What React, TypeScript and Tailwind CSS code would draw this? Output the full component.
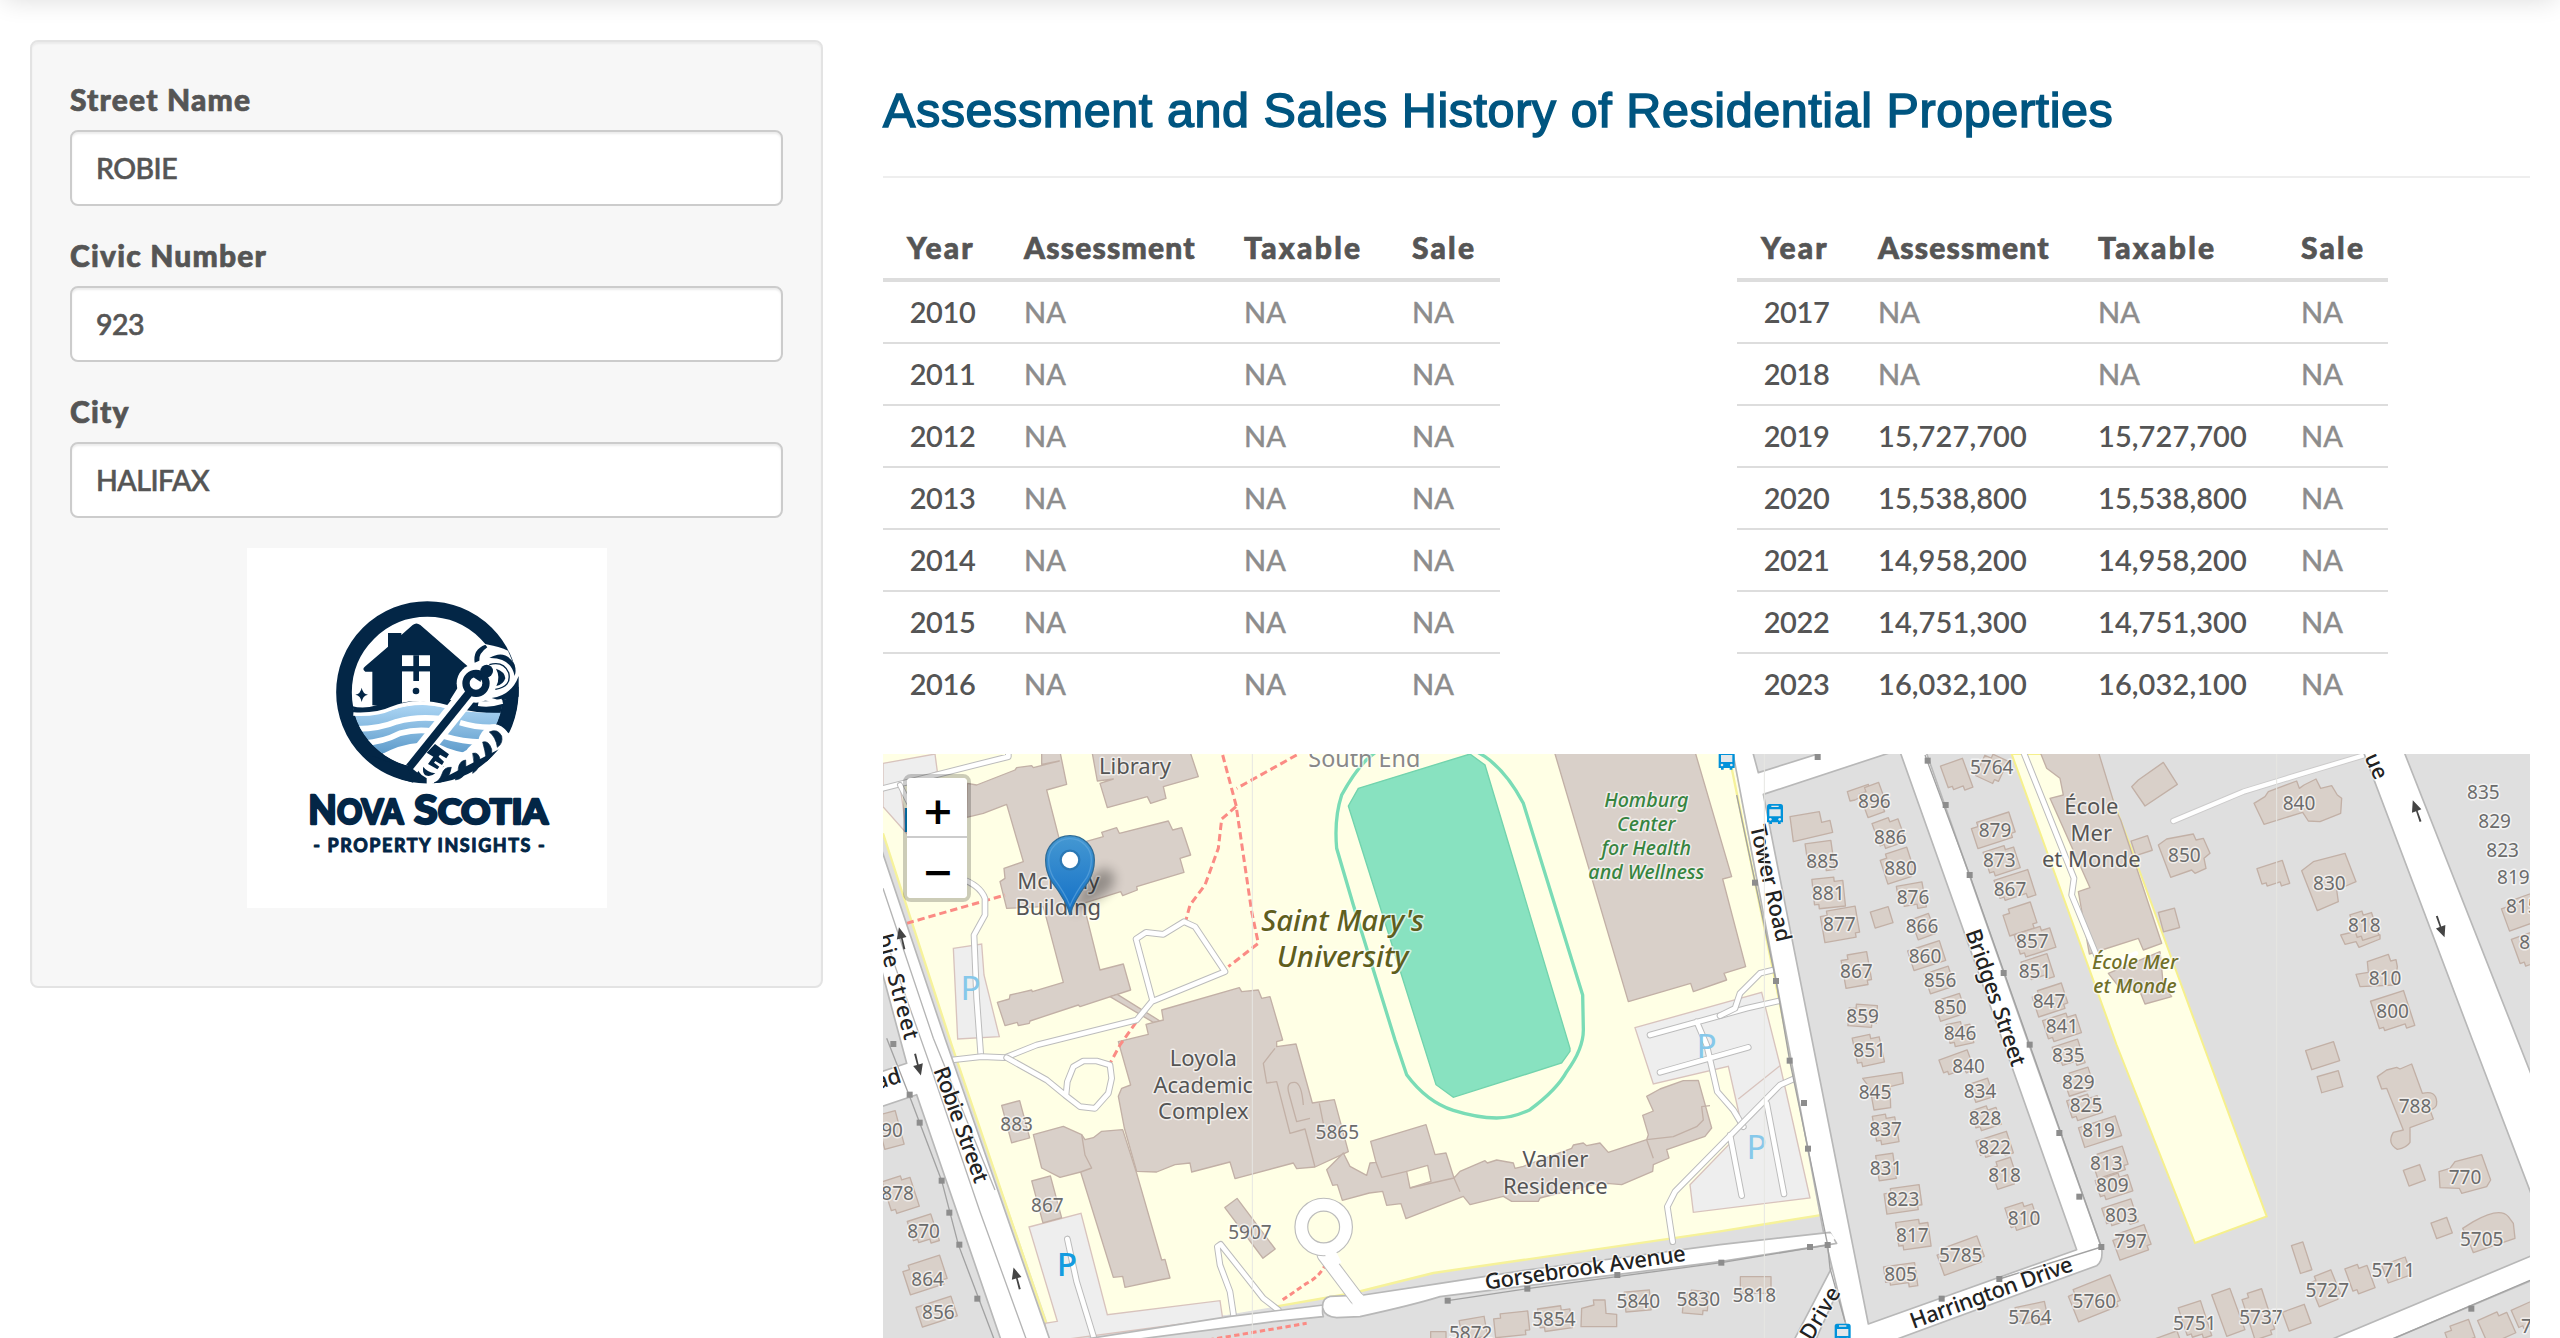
import React from "react";

type Row = [string, string, string, string];
type Label = [string, number, number];
type House = [number, number, number, number, number];

const EARLY: Row[] = ["2010", "2011", "2012", "2013", "2014", "2015", "2016"].map(
  (y) => [y, "NA", "NA", "NA"] as Row
);
const LATE: Row[] = [
  ["2017", "NA", "NA", "NA"],
  ["2018", "NA", "NA", "NA"],
  ["2019", "15,727,700", "15,727,700", "NA"],
  ["2020", "15,538,800", "15,538,800", "NA"],
  ["2021", "14,958,200", "14,958,200", "NA"],
  ["2022", "14,751,300", "14,751,300", "NA"],
  ["2023", "16,032,100", "16,032,100", "NA"],
];

function Field({ label, value }: { label: string; value: string }) {
  return (
    <label className="mb-5 block">
      <span className="block h-[60px] pt-[9px] text-[30px] leading-[40px] font-black tracking-[1.2px] text-[#555] [-webkit-text-stroke:0.7px_#555]">
        {label}
      </span>
      <span className="flex h-[76px] items-center rounded-lg border-2 border-[#ccc] bg-white pl-[24px] text-[28.5px] font-medium tracking-[-0.5px] text-[#555] shadow-[inset_0_2px_2px_rgba(0,0,0,0.075)] [-webkit-text-stroke:0.6px_#555]">
        {value}
      </span>
    </label>
  );
}

function HistoryTable({ rows, cols }: { rows: Row[]; cols: string }) {
  return (
    <div className="text-[29px] leading-[40px] text-[#555]">
      <div
        className={`grid h-[66px] border-b-4 border-[#ddd] pt-[11px] text-[30px] font-black [-webkit-text-stroke:0.7px_#555] ${cols}`}
      >
        <span className="pl-6 tracking-[2.2px]">Year</span>
        <span className="pl-6 tracking-[1.2px]">Assessment</span>
        <span className="pl-6 tracking-[2.3px]">Taxable</span>
        <span className="pl-6 tracking-[2.2px]">Sale</span>
      </div>
      {rows.map((r, i) => (
        <div
          key={r[0]}
          className={`grid items-center ${cols} ${i === 0 ? "h-[60px]" : "h-[62px] border-t-2 border-[#ddd]"}`}
        >
          {r.map((v, j) => (
            <span
              key={j}
              className={
                j === 0
                  ? "pl-[2px] text-center font-semibold tracking-[-0.4px]"
                  : v === "NA"
                    ? "pl-6 text-[#8c8c8c] [-webkit-text-stroke:0.5px_#8c8c8c]"
                    : "pl-[24px] font-semibold tracking-[0.1px]"
              }
            >
              {v}
            </span>
          ))}
        </div>
      ))}
    </div>
  );
}

function Logo() {
  const navy = "#032646";
  return (
    <svg className="mx-auto block h-[360px] w-[360px] bg-white" viewBox="21 24 1080 1080">
      <defs>
        <linearGradient id="sea" x1="0" y1="500" x2="0" y2="640" gradientUnits="userSpaceOnUse">
          <stop offset="0" stopColor="#a9d3f2" />
          <stop offset="1" stopColor="#5f9ccb" />
        </linearGradient>
        <clipPath id="disc">
          <circle cx="562" cy="457" r="228" />
        </clipPath>
      </defs>
      <circle cx="562" cy="457" r="250" fill="#fff" stroke={navy} strokeWidth="47" />
      <g clipPath="url(#disc)">
        <path d="M335 498Q370 508 410 496L470 480H720L800 490V522Q700 520 640 500Q560 480 480 500Q400 530 335 518Z" fill={navy} />
        <path d="M335 522Q400 528 455 510Q530 486 600 500Q690 522 790 518V640H335Z" fill="url(#sea)" />
        <path d="M335 510Q400 518 455 497Q520 478 600 490" fill="none" stroke="#fff" strokeWidth="0" />
        <path d="M330 566Q410 570 470 545Q530 528 600 536M660 548Q730 570 800 558M370 610Q430 606 480 580Q530 566 580 574M610 588Q690 612 760 604" fill="none" stroke="#fff" strokeWidth="17" />
        <path d="M420 645Q480 612 540 608L500 700H400ZM590 610Q650 640 700 640V720H560Z" fill="#fff" />
      </g>
      <path d="M397 496V395H376Q364 388 376 379L444 320V279H484V285L518 255Q529 246 541 255L690 385L620 496Q560 470 486 488Q440 500 397 496Z" fill={navy} />
      <path d="M340 522Q410 526 455 505Q530 475 620 500" fill="none" stroke="#fff" strokeWidth="11" />
      <path d="M486 346H570V379H486ZM486 394H570V488Q528 480 486 488Z" fill="#fff" />
      <path d="M520 346H537V423H520ZM486 379H570V394H486Z" fill={navy} />
      <circle cx="528" cy="453" r="10" fill={navy} />
      <path d="M365 443Q368 461 384 464Q368 467 365 486Q362 467 346 464Q362 461 365 443Z" fill={navy} />
      <path d="M400 648Q450 672 500 676L520 728Q440 710 390 660Z" fill={navy} />
      {/* rope */}
      <path d="M560 740L850 590L806 580Q780 545 748 555Q720 575 715 600Q690 615 680 630Q640 650 610 680L560 700Z" fill="#fff" />
      <g fill={navy} stroke={navy} strokeWidth="2" strokeLinejoin="round">
        <path d="M748 576Q772 564 785 588Q790 610 772 622Q768 592 748 576Z" />
        <path d="M728 606Q746 600 755 628Q758 650 740 664Q735 630 728 606Z" />
        <path d="M698 640Q717 635 721 662Q718 688 698 700Q706 668 698 640Z" />
        <path d="M677 660Q658 663 655 685Q656 705 646 720Q672 716 678 692Z" />
        <path d="M634 682Q612 680 606 702Q598 724 583 728Q626 732 634 682Z" />
      </g>
      <path d="M779 545Q790 500 790 460L836 440Q836 520 804 578Q795 556 779 545Z" fill={navy} />
      {/* key ring */}
      <path d="M735 312Q780 320 804 332L836 408Q830 470 790 480L745 478L700 400Z" fill="#fff" />
      <path d="M704 368Q698 328 736 314L742 322Q716 340 718 362Z" fill={navy} />
      <path d="M748 354Q795 326 823 372Q830 392 824 408Q812 352 748 354Z" fill={navy} />
      <path d="M748 374Q790 362 806 398Q816 440 766 448" fill="none" stroke={navy} strokeWidth="4" />
      <path d="M768 386Q795 395 796 415Q790 434 769 438Q782 412 768 386Z" fill={navy} />
      <path d="M755 474Q815 466 836 408V470L792 480Q775 482 755 474Z" fill={navy} />
      <path d="M690 502Q740 480 785 490L779 517Q730 518 690 508Z" fill={navy} />
      <path d="M715 490Q750 496 787 484" fill="none" stroke="#fff" strokeWidth="16" />
      {/* key */}
      <path d="M690 455L510 680" stroke="#fff" strokeWidth="56" />
      <circle cx="708" cy="430" r="58" fill="#fff" />
      <path d="M585 605L630 645L590 712Q545 725 530 680Z" fill="#fff" />
      <path d="M740 393Q756 430 740 452" fill="none" stroke="#fff" strokeWidth="14" />
      <path d="M690 455L508 682" stroke={navy} strokeWidth="24" />
      <circle cx="708" cy="430" r="30" fill="none" stroke={navy} strokeWidth="22" />
      <circle cx="740" cy="393" r="19" fill={navy} />
      <path d="M700 412L724 408L722 426Z" fill={navy} />
      <path d="M585 612L627 643L619 655L600 644L596 650L612 665L606 675L586 663L582 668L598 680L592 688L564 672L580 650L560 638Z" fill={navy} />
      <path d="M550 680Q560 696 586 700Q572 712 556 706Q546 696 550 680Z" fill={navy} />
      <g fill={navy} stroke={navy} strokeLinejoin="round" fontFamily="Lato, sans-serif" fontWeight="900">
        <text x="205" y="851" fontSize="122" strokeWidth="7" textLength="285" lengthAdjust="spacingAndGlyphs">
          N<tspan fontSize="103">OVA</tspan>
        </text>
        <text x="522" y="851" fontSize="122" strokeWidth="7" textLength="402" lengthAdjust="spacingAndGlyphs">
          S<tspan fontSize="103">COTIA</tspan>
        </text>
        <text x="220" y="935" fontSize="54" strokeWidth="3" fontWeight="700" textLength="694">
          - PROPERTY INSIGHTS -
        </text>
      </g>
    </svg>
  );
}

/* Map drawing units are thirds of a pixel. */
const ADDRESSES: Label[] = [
  ["896", 2983, 168], ["886", 3031, 278], ["885", 2828, 348], ["880", 3062, 370], ["881", 2845, 445],
  ["876", 3099, 458], ["877", 2878, 537], ["866", 3126, 545], ["867", 2929, 680], ["860", 3135, 635],
  ["856", 3180, 707], ["850", 3211, 787], ["859", 2948, 815], ["846", 3240, 866], ["5764", 3335, 66],
  ["879", 3345, 256], ["873", 3358, 346], ["867", 3390, 433], ["857", 3457, 588], ["851", 3465, 678],
  ["847", 3507, 768], ["841", 3546, 845], ["851", 2969, 917], ["845", 2985, 1041], ["837", 3017, 1154],
  ["831", 3018, 1271], ["823", 3069, 1364], ["817", 3097, 1471], ["805", 3062, 1589], ["5785", 3242, 1531],
  ["840", 3266, 963], ["834", 3300, 1039], ["828", 3315, 1120], ["822", 3344, 1208], ["818", 3374, 1290],
  ["810", 3432, 1421], ["835", 3565, 930], ["829", 3595, 1012], ["825", 3618, 1082], ["819", 3656, 1156],
  ["813", 3679, 1255], ["809", 3697, 1321], ["803", 3724, 1411], ["797", 3752, 1489], ["5818", 2623, 1652],
  ["5764", 3450, 1717], ["5760", 3643, 1668], ["840", 4257, 175], ["850", 3913, 332], ["830", 4348, 415],
  ["818", 4453, 541], ["810", 4515, 701], ["800", 4538, 800], ["835", 4810, 142], ["829", 4844, 230],
  ["823", 4868, 315], ["819", 4900, 398], ["815", 4927, 485], ["811", 4967, 593], ["788", 4605, 1084],
  ["770", 4755, 1296], ["5705", 4805, 1483], ["5711", 4540, 1576], ["5727", 4342, 1636], ["5737", 4143, 1717],
  ["5751", 3944, 1735], ["761", 4972, 1744], ["883", 410, 1137], ["867", 502, 1382], ["5907", 1110, 1461],
  ["890", 20, 1157], ["878", 53, 1346], ["870", 131, 1459], ["864", 143, 1603], ["856", 175, 1702],
  ["5865", 1372, 1162], ["5872", 1772, 1764], ["5854", 2022, 1722], ["5840", 2275, 1668], ["5830", 2455, 1663],
];

/* centre x, centre y, width, height, rotation */
const HOUSES: House[] = [
  [2980, 165, 66, 88, -20], [3027, 262, 78, 84, -20], [2820, 335, 78, 88, -8], [3052, 362, 88, 88, -18],
  [2846, 443, 92, 90, -6], [3094, 455, 78, 76, -10], [2880, 538, 108, 92, -10], [3130, 545, 56, 64, -20],
  [3140, 632, 100, 62, -18], [2929, 675, 80, 98, -10], [3178, 705, 76, 62, -18], [3210, 787, 80, 62, -18],
  [2948, 812, 84, 66, 4], [3240, 866, 70, 70, -12], [3005, 517, 56, 50, -17],
  [3340, 256, 122, 76, -18], [3365, 345, 92, 78, -18], [3405, 428, 106, 80, -18], [3420, 522, 90, 78, -18],
  [3465, 588, 108, 74, -18], [3473, 673, 82, 72, -18], [3510, 765, 96, 76, -18], [3546, 845, 100, 70, -18],
  [3230, 95, 70, 92, -20], [3335, 70, 70, 80, 25],
  [2965, 915, 80, 90, -12], [3230, 960, 90, 64, -20], [3305, 1036, 56, 58, -18], [3318, 1118, 76, 66, -18],
  [3344, 1206, 96, 68, -18], [3372, 1285, 66, 80, -18], [3425, 1412, 82, 74, -18], [3566, 930, 80, 74, -18],
  [3596, 1010, 80, 66, -18], [3614, 1085, 92, 66, -18], [3660, 1160, 116, 62, -18], [3690, 1252, 100, 70, -18],
  [3702, 1322, 98, 64, -18], [3720, 1410, 92, 72, -18], [3756, 1492, 104, 76, -20],
  [3017, 1152, 66, 88, -10], [3018, 1266, 52, 76, -8], [3069, 1363, 108, 74, -8], [3100, 1468, 96, 84, -8],
  [3062, 1594, 94, 70, -8], [3242, 1532, 132, 78, -20], [2627, 1620, 92, 50, 0],
  [3456, 1711, 90, 66, -12], [3643, 1660, 140, 96, -22],
  [4453, 540, 64, 84, -18], [4538, 805, 104, 110, -18], [4940, 495, 140, 84, -20], [4980, 600, 150, 90, -20],
  [4180, 393, 80, 72, -18], [4328, 932, 88, 60, -18], [4350, 1010, 66, 50, -16],
  [4603, 1291, 52, 50, -20], [4685, 1449, 50, 50, -20], [4550, 1575, 74, 56, -20],
  [4265, 1538, 36, 88, -18], [4335, 1630, 74, 90, -22], [4440, 1600, 66, 84, -20],
  [4045, 1702, 58, 132, -20], [4135, 1708, 66, 140, -18], [4250, 1718, 70, 60, -20], [3945, 1730, 70, 110, -18],
  [4740, 1770, 80, 70, -20], [4850, 1745, 90, 80, -24], [4960, 1710, 110, 80, -24], [3860, 1790, 80, 40, -20],
  [3785, 302, 52, 46, -18], [3867, 525, 50, 60, -15],
  [30, 1155, 60, 104, -15], [62, 1347, 84, 104, -18], [130, 1458, 74, 84, -18], [135, 1590, 120, 86, -18],
  [170, 1700, 110, 62, -18], [407, 1130, 56, 116, -15], [500, 1363, 58, 130, -15],
  [1110, 1450, 46, 190, -37], [1780, 1750, 76, 60, -10], [1895, 1738, 104, 70, -6], [2025, 1720, 96, 70, -8],
  [2273, 1668, 76, 60, -5], [2447, 1672, 74, 70, 5], [1675, 1775, 46, 30, 0],
];

function House({ h, i }: { h: House; i: number }) {
  const [cx, cy, w, ht, r] = h;
  const a = w / 2;
  const b = ht / 2;
  const n = Math.min(w, ht) > 62 ? 13 : 0;
  const shapes = [
    `M${-a} ${-b + n}H${-a + n * 1.6}V${-b}H${a}V${b - n}H${a - n}V${b}H${-a}Z`,
    `M${-a} ${-b}H${a - n * 2}V${-b + n}H${a}V${b}H${-a + n}V${b - n}H${-a}Z`,
    `M${-a} ${-b}H${a}V${b}H${a - n * 2}V${b - n}H${-a + n}V${b - n * 1.8}H${-a}Z`,
  ];
  return <path d={shapes[i % 3]} transform={`translate(${cx} ${cy}) rotate(${r})`} />;
}

const NODES: [number, number][] = [
  [40, 897], [89, 1049], [119, 1133], [185, 1307], [208, 1403], [238, 1499], [292, 1661],
  [1703, 1667], [1942, 1631], [2212, 1590], [2524, 1553], [2790, 1506], [2843, 1500],
  [2625, 413], [2688, 708], [2729, 947], [2772, 1074], [2784, 1211], [2813, 36],
  [3143, 47], [3197, 180], [3269, 390], [3371, 684], [3449, 899], [3538, 1164], [3598, 1355], [3664, 1506],
  [3358, 1602], [3185, 1661], [4774, 1691],
];

function Cased({ d, w, edge = 6, color = "#bcbcbc" }: { d: string; w: number; edge?: number; color?: string }) {
  return (
    <g fill="none" strokeLinecap="round" strokeLinejoin="round">
      <path d={d} stroke={color} strokeWidth={w + edge} />
      <path d={d} stroke="#fff" strokeWidth={w} />
    </g>
  );
}

function Bus({ x, y }: { x: number; y: number }) {
  return (
    <g transform={`translate(${x} ${y})`}>
      <path d="M-17 -30H17Q24 -30 24 -22V25H17V30H9V25H-9V30H-17V25H-24V-22Q-24 -30 -17 -30Z" fill="#0092da" />
      <path d="M-11 -25H11V-21H-11ZM-17 -14H17V7H-17Z" fill="#e3e7ea" />
      <circle cx="-14" cy="16" r="4" fill="#e3e7ea" />
      <circle cx="14" cy="16" r="4" fill="#e3e7ea" />
    </g>
  );
}

function Arrow({ x, y, r }: { x: number; y: number; r: number }) {
  return (
    <path
      d="M-3 34L-2 0H-15L0 -34L15 0H3L3 34Z"
      fill="#444"
      transform={`translate(${x} ${y}) rotate(${r})`}
    />
  );
}

function Lines({
  lines, x, y, step, size, fill, italic,
}: { lines: string[]; x: number; y: number; step: number; size: number; fill: string; italic?: boolean }) {
  return (
    <g
      fontSize={size}
      fill={fill}
      fontStyle={italic ? "italic" : "normal"}
      fontWeight={italic ? 500 : 400}
      textAnchor="middle"
    >
      {lines.map((t, i) => (
        <text key={t} x={x} y={y + i * step}>
          {t}
        </text>
      ))}
    </g>
  );
}

function CampusMap() {
  return (
    <svg className="block h-[584px] w-[1647px]" viewBox="9 27 4941 1752">
      <defs>
        <linearGradient id="pin" x1="0" y1="270" x2="0" y2="510" gradientUnits="userSpaceOnUse">
          <stop offset="0" stopColor="#4598d2" />
          <stop offset="1" stopColor="#126fc6" />
        </linearGradient>
        <filter id="soft" x="-50%" y="-50%" width="200%" height="200%">
          <feGaussianBlur stdDeviation="17" />
        </filter>
      </defs>
      <rect x="0" y="0" width="4960" height="1800" fill="#dfdfdf" />
      {/* campus and school grounds */}
      <path d="M9 27H2558L2730 950L2832 1409L2520 1459L1660 1584L1420 1644L1040 1710L505 1740L215 900L9 265Z" fill="#ffffe5" />
      <path d="M9 265L215 900L500 1739M1190 1684L1420 1644L1660 1584L2520 1459L2832 1409L2725 900L2555 70" fill="none" stroke="#f6f29a" strokeWidth="7" />
      <path d="M3395 27H3645L3750 300L3970 900L4160 1414L3945 1494L3710 900Z" fill="#ffffe5" stroke="#f6f08c" strokeWidth="6" />
      {/* parking */}
      <g fill="#eeeeee" stroke="#d8c3bd" strokeWidth="4">
        <path d="M9 55L165 27L172 80L60 120L80 265L9 185Z" />
        <path d="M220 610L305 597L312 690L358 875L233 882Z" />
        <path d="M2265 848L2645 742L2700 960L2790 1359L2440 1402L2430 1319L2555 1190L2580 1119L2545 964L2320 1017Z" />
        <path d="M447 1446L603 1405L682 1709L1020 1667L1028 1720L505 1790L495 1735L532 1729Z" />
      </g>
      <path d="M2575 1062L2700 962" stroke="#d8c3bd" strokeWidth="4" />
      {/* sports field */}
      <path d="M1435 130L1770 27L1815 60L2070 910L2070 919L2045 954L1720 1057L1668 1019L1405 183Z" fill="#88e2c0" stroke="#72d3ad" strokeWidth="4" />
      <path d="M1490 20Q1440 50 1385 150Q1362 220 1370 310L1420 480L1545 885L1580 989Q1640 1070 1720 1096Q1790 1118 1850 1119Q1900 1118 1950 1094Q2030 1035 2060 980Q2112 910 2110 850L2108 750L1930 175Q1880 80 1815 35L1790 20" fill="none" stroke="#7adcb6" strokeWidth="10" />

      {/* buildings */}
      <g fill="#d9d0c9" stroke="#c2b0a6" strokeWidth="4" strokeLinejoin="round">
        <path d="M485 20H540L560 118L500 135L545 310L670 275L665 262L710 248L718 265L865 228L878 255L905 248L932 330L900 340L912 382L770 425L772 435L728 452L722 440L610 475L660 675L730 657L752 735L600 785L595 780L450 828L448 835L415 842L412 832L375 842L352 772L388 762L390 750L455 735L457 740L550 712L490 485L380 490L360 410L375 400L372 370L430 350L380 178L310 205L260 217L262 115L290 120L405 75L410 68L455 62L460 68L538 48L485 58Z" />
        <path d="M636 20H930L955 95L850 125L858 160L812 175L802 155L682 188L660 115L700 102L652 108Z" />
        <path d="M690 755L712 748L840 828L820 832Z" />
        <path d="M715 890L805 868L798 838L850 825L845 795L1078 728L1085 740L1135 735L1145 760L1170 755L1208 885L1190 890L1190 905L1248 897L1297 1074L1363 1064L1405 1220L1305 1266L1250 1271L1240 1254L1065 1301L1050 1251L935 1281L930 1254L885 1259L830 1281L770 1279L733 1149L715 1054L725 1030L752 1020Z" />
        <path d="M1185 910L1150 955L1160 1014L1190 1010L1230 1165L1275 1152L1305 1266M1228 1050Q1215 1010 1245 1012Q1265 1015 1270 1080M1228 1050L1250 1130L1290 1120M1318 1075L1330 1135" fill="none" />
        <path d="M460 1169L550 1144L605 1169L615 1184L640 1178L665 1159L728 1154L770 1285L845 1545L855 1543L870 1599L838 1605L735 1627L728 1594L700 1597L602 1281L540 1297L485 1269Z" />
        <path d="M605 1169L615 1230L635 1269L602 1281" fill="none" />
        <path fillRule="evenodd" d="M1340 1274L1390 1224L1410 1264L1460 1291L1470 1254L1488 1252L1472 1189L1638 1139L1665 1229L1698 1224L1722 1299L1740 1279L1815 1247L1822 1254L1850 1245L1900 1254L1905 1270L1930 1264L2075 1210L2080 1200L2110 1194L2120 1202L2160 1194L2185 1222L2300 1184L2305 1169L2288 1111L2320 1098L2300 1054L2340 1032L2410 1007L2455 1006L2495 1149L2475 1174L2360 1214L2367 1239L2320 1259L2318 1279L2225 1319L2180 1315L2140 1319L1980 1359L1975 1369L1950 1369L1895 1369L1870 1354L1770 1379L1750 1354L1578 1421L1563 1376L1520 1381L1508 1339L1468 1344L1387 1366L1372 1319L1358 1321ZM1580 1279L1643 1261L1653 1309L1590 1329Z" />
        <path d="M1488 1252L1505 1297L1580 1279M1722 1299L1590 1329M1722 1299L1740 1340M2300 1184L2380 1175L2450 1145L2470 1125L2465 1085L2490 1082M2300 1184L2320 1240" fill="none" />
        <path d="M2023 20H2445L2555 395L2528 402L2597 665L2532 685L2540 705L2440 740L2432 715L2245 770Z" />
        <path d="M3480 20H3655L3710 200L3722 225L3845 595L3790 615L3775 580L3628 627L3595 440L3630 428L3575 305L3510 160L3550 150L3540 100L3500 70Z" />
        <path d="M3685 685L3840 620L3850 720L3875 755L3795 777L3780 740L3720 730Z" />
        <path d="M2730 215L2818 200L2825 232L2850 226L2858 262L2740 290Z" />
        <path d="M2902 140L2965 118L2972 140L2925 165L2910 168Z" />
        <path d="M2948 1000L3066 982L3070 1015L3030 1025L3032 1088L2982 1095L2970 1030Z" />
        <path d="M3755 125L3775 105L3850 52L3892 118L3795 183Z" />
        <path d="M3835 300L3860 282L3940 267L3948 285L3970 280L3990 325L3972 340L3978 370L3945 385L3935 375L3872 397Z" />
        <path d="M4122 175L4155 155L4165 140L4250 108L4258 130L4272 120L4308 102L4322 130L4355 122L4372 150L4385 160L4382 205L4320 230L4285 228L4268 202L4152 238Z" />
        <path d="M4265 377L4300 350L4395 325L4428 410L4370 435L4375 470L4312 497Z" />
        <path d="M4382 570L4440 556L4500 570L4500 582L4437 607L4428 590L4395 598Z" />
        <path d="M4462 650L4525 628L4532 648L4548 644L4552 665L4545 720L4440 725L4428 688L4465 682Z" />
        <path d="M4492 995L4520 975L4550 967L4560 972L4595 957L4627 1045Q4668 1035 4670 1070Q4672 1090 4650 1095L4660 1122L4590 1148L4590 1192Q4580 1208 4552 1213Q4520 1195 4540 1162L4570 1155L4520 1030L4505 1032Z" />
        <path d="M4677 1280L4710 1270L4725 1250L4805 1229L4832 1305L4820 1325L4745 1345L4738 1330L4680 1328Z" />
        <path d="M4748 1450L4780 1430Q4860 1385 4885 1415L4900 1435L4905 1480L4780 1523L4765 1485Z" />
        <path d="M2105 1690L2142 1680L2140 1665L2175 1665L2178 1705L2210 1708L2210 1745H2103Z" />
        {HOUSES.map((h, i) => (
          <House key={i} h={h} i={i} />
        ))}
      </g>

      {/* footpaths */}
      <g fill="none" stroke="#fb8b84" strokeWidth="9" strokeDasharray="22 12">
        <path d="M80 535L375 450M1028 30L1068 180L1115 500L1135 595L1045 665M1068 185L1025 222L1015 310L975 420L930 480L918 525M1250 30L1070 130" />
        <path d="M768 832L720 900L690 955" />
        <path d="M1338 1555Q1320 1595 1280 1615L1200 1670M960 1789L1280 1735" strokeDasharray="16 10" />
      </g>

      {/* service ways */}
      <Cased w={14} d="M9 130L385 35V20" />
      <Cased w={12} d="M60 120L110 220" />
      <Cased w={14} d="M240 400Q300 420 315 460V510L282 570L290 760L302 925" />
      <Cased w={14} d="M215 945L305 935L375 938L470 900L770 825L815 770L1035 680L945 545L912 530L850 568L798 562L768 582L818 768" />
      <Cased w={14} d="M380 938L500 1005L555 1050L600 1085L645 1090L685 1045L695 1000L690 960L650 948H610L580 965L562 1010L558 1050" />
      <Cased w={14} d="M562 1482L590 1610L645 1789" />
      <Cased w={14} d="M1062 1720L1050 1640L1020 1560L1012 1505L1022 1498L1150 1660L1195 1695" />
      <Cased w={14} d="M2310 870L2600 790L2700 767M2450 830L2480 900L2512 1040L2560 1095L2590 1145M2340 982L2605 907" />
      <Cased w={14} d="M2680 675L2640 685L2580 745L2565 790L2520 812" />
      <Cased w={14} d="M2378 1490L2362 1385L2385 1340L2700 1020L2745 1000M2660 1075L2712 1347M2550 1170L2585 1352" />
      <Cased w={13} d="M3880 228L4090 140L4260 88L4455 30" color="#cccbcb" />
      <Cased w={14} d="M3430 20L3582 400L3575 450L3650 632" />
      <path d="M3720 645L3768 625" stroke="#fff" strokeWidth="14" strokeLinecap="round" />

      {/* streets */}
      <g fill="#fff" stroke="#b8b8b8" strokeWidth="5" strokeLinejoin="round">
        <path d="M-10 270L195 880L515 1800H368L110 1049L-10 1090V985L80 955L-10 620Z" />
        <path d="M505 1800L1050 1714L1330 1680Q1325 1700 1330 1715L1180 1730L640 1800Z" />
        <path d="M2740 1789L2860 1559L2890 1600L2800 1800Z" />
        <path d="M2558 20H2618L2635 83L2835 20H3040L2650 148L2795 879L2965 1737L3590 1514L3365 879L3060 20H3138L3440 879L3665 1509Q3670 1550 3650 1562L3030 1790H2910L2830 1459L2725 900Z" />
        <path d="M2850 1462L2520 1499L1940 1575L1680 1615L1450 1650L1350 1654Q1325 1660 1328 1690Q1335 1716 1370 1718L1440 1715Q1600 1680 1680 1655L2520 1550L2870 1495Z" />
        <path d="M4450 20H4572L4960 1005V1364L4775 879Z" />
        <path d="M4960 1530L4350 1785L4530 1785L4960 1604Z" />
      </g>
      <path d="M2843 1472L2856 1488" stroke="#fff" strokeWidth="24" />
      <path d="M30 620L150 960L300 1400L445 1800M9 430L160 880L345 1335" fill="none" stroke="#b5b5b5" strokeWidth="4" />
      <path d="M20 880L95 1070L185 1307L235 1499L345 1790M1703 1667L1942 1631L2524 1553L2843 1500L2850 1570L2895 1730M3135 30L3269 390L3449 899L3664 1506L3358 1602M2570 150L2688 708L2729 947L2784 1211L2843 1500M4530 1785L4950 1606" fill="none" stroke="#a2a2a2" strokeWidth="4" />
      <Cased w={38} d="M1332 1530L1430 1660" />
      <path d="M1430 1662L1460 1690" stroke="#fff" strokeWidth="42" />
      <circle cx="1331" cy="1446" r="67" fill="none" stroke="#bcbcbc" strokeWidth="42" />
      <circle cx="1331" cy="1446" r="67" fill="none" stroke="#fff" strokeWidth="35" />
      <path d="M1342 1506L1370 1560" stroke="#fff" strokeWidth="34" />
      <g fill="#8d8d8d">
        {NODES.map(([x, y], i) => (
          <rect key={i} x={x - 9} y={y - 9} width="18" height="18" />
        ))}
      </g>

      <Arrow x={65} y={580} r={-14} />
      <Arrow x={114} y={959} r={165} />
      <Arrow x={410} y={1600} r={-16} />
      <Arrow x={4610} y={198} r={-20} />
      <Arrow x={4682} y={545} r={160} />
      <Bus x={2540} y={44} />
      <Bus x={2685} y={207} />
      <Bus x={2888} y={1766} />

      <g fontFamily="'Noto Sans', sans-serif" stroke="#fff" strokeOpacity="0.65" strokeWidth="9" strokeLinejoin="round" paintOrder="stroke">
        <g fontSize="100" textAnchor="middle" fill="#86c8ea" strokeWidth="0">
          <text x="272" y="765">P</text>
          <text x="2480" y="939">P</text>
          <text x="2630" y="1243">P</text>
          <text x="561" y="1592" fill="#149ce0" fontWeight="500">P</text>
          <text x="96" y="262" fill="#0080c0" fontWeight="700">P</text>
        </g>
        <g fontSize="57" fill="#6c6c6c" textAnchor="middle">
          {ADDRESSES.map(([t, x, y], i) => (
            <text key={i} x={x} y={y + 20}>
              {t}
            </text>
          ))}
        </g>
        <Lines lines={["Library"]} x={765} y={88} step={0} size={66} fill="#555" />
        <Lines lines={["McNally", "Building"]} x={535} y={432} step={79} size={66} fill="#555" />
        <Lines lines={["Loyola", "Academic", "Complex"]} x={970} y={964} step={79} size={66} fill="#555" />
        <Lines lines={["Vanier", "Residence"]} x={2026} y={1267} step={79} size={66} fill="#555" />
        <Lines lines={["École", "Mer", "et Monde"]} x={3634} y={208} step={79} size={66} fill="#555" />
        <Lines lines={["South End"]} x={1453} y={67} step={0} size={70} fill="#888" />
        <Lines lines={["Saint Mary's", "University"]} x={1388} y={558} step={107} size={88} fill="#5f5e1d" italic />
        <Lines lines={["Homburg", "Center", "for Health", "and Wellness"]} x={2299} y={186} step={71.5} size={59} fill="#368440" italic />
        <Lines lines={["École Mer", "et Monde"]} x={3765} y={672} step={71} size={59} fill="#6f6f28" italic />
        <g fontSize="66" fill="#222" fontWeight="500">
          <text transform="translate(-10 574) rotate(75)" textLength="325">bie Street</text>
          <text transform="translate(160 975) rotate(70)" textLength="365">Robie Street</text>
          <text transform="translate(-46 1046) rotate(-17)">oad</text>
          <text transform="translate(2610 245) rotate(77)" textLength="358">Tower Road</text>
          <text transform="translate(3256 562) rotate(71)" textLength="430">Bridges Street</text>
          <text transform="translate(1818 1634) rotate(-8.2)" textLength="608">Gorsebrook Avenue</text>
          <text transform="translate(3100 1752) rotate(-20)" textLength="514">Harrington Drive</text>
          <text transform="translate(2795 1790) rotate(-59)" textLength="172">Drive</text>
          <text transform="translate(4453 36) rotate(66)">ue</text>
        </g>
      </g>

      {/* tile seams */}
      <path d="M1117 27V1800M2653 27V1800M4190 27V1800" stroke="#e6e6e2" strokeWidth="3" />

      {/* marker */}
      <path d="M575 505Q610 400 670 370Q720 380 695 430Q650 470 575 505Z" fill="#000" opacity="0.32" filter="url(#soft)" />
      <path d="M570 510Q560 468 515 410Q497 380 497 345A73 73 0 0 1 643 345Q643 380 625 410Q580 468 570 510Z" fill="url(#pin)" stroke="#2e6c97" strokeWidth="4" />
      <path d="M570 482Q555 445 520 398Q506 372 506 345A64 64 0 0 1 634 345Q634 372 620 398Q585 445 570 482Z" fill="none" stroke="#66aadd" strokeOpacity="0.6" strokeWidth="4" />
      <circle cx="570" cy="345" r="28" fill="#fff" stroke="#2c78b4" strokeWidth="7" />
    </svg>
  );
}

export default function App() {
  return (
    <div className="relative h-[1338px] w-[2560px] overflow-hidden bg-white font-['Lato',sans-serif]">
      <div className="absolute -top-10 right-1 left-1 h-10 shadow-[0_0_26px_rgba(0,0,0,0.14)]" />
      <div className="flex items-start pl-[30px] pt-10">
        <aside className="h-[948px] w-[793px] rounded-lg border-2 border-[#e3e3e3] bg-[#f7f7f7] px-[38px] pt-7 shadow-[inset_0_2px_2px_rgba(0,0,0,0.05)]">
          <Field label="Street Name" value="ROBIE" />
          <Field label="Civic Number" value="923" />
          <Field label="City" value="HALIFAX" />
          <div className="pt-[10px]">
            <Logo />
          </div>
        </aside>
        <main className="ml-[60px] w-[1647px]">
          <h1 className="h-[136px] pt-[42px] font-['Liberation_Sans',sans-serif] text-[48.5px] leading-[56px] tracking-[0.57px] whitespace-nowrap text-[#005580] [-webkit-text-stroke:1.5px_#005580]">
            Assessment and Sales History of Residential Properties
          </h1>
          <hr className="border-t-2 border-[#eee]" />
          <div className="flex h-[576px] pt-[38px]">
            <div className="w-[617px]">
              <HistoryTable rows={EARLY} cols="grid-cols-[117px_220px_168px_112px]" />
            </div>
            <div className="ml-[237px] w-[651px]">
              <HistoryTable rows={LATE} cols="grid-cols-[117px_220px_203px_111px]" />
            </div>
          </div>
          <div className="relative">
            <CampusMap />
            <div className="absolute top-5 left-5 w-[68px] rounded-lg border-4 border-black/20 bg-clip-padding font-['DejaVu_Sans',sans-serif] text-[38px] font-bold text-black">
              <div className="flex h-[60px] items-center justify-center rounded-t-sm border-b-2 border-[#ccc] bg-white pt-2 pl-[2px] leading-none">
                +
              </div>
              <div className="flex h-[60px] items-center justify-center rounded-b-sm bg-white pt-[7px] pl-[2px] leading-none">
                −
              </div>
            </div>
          </div>
        </main>
      </div>
    </div>
  );
}
